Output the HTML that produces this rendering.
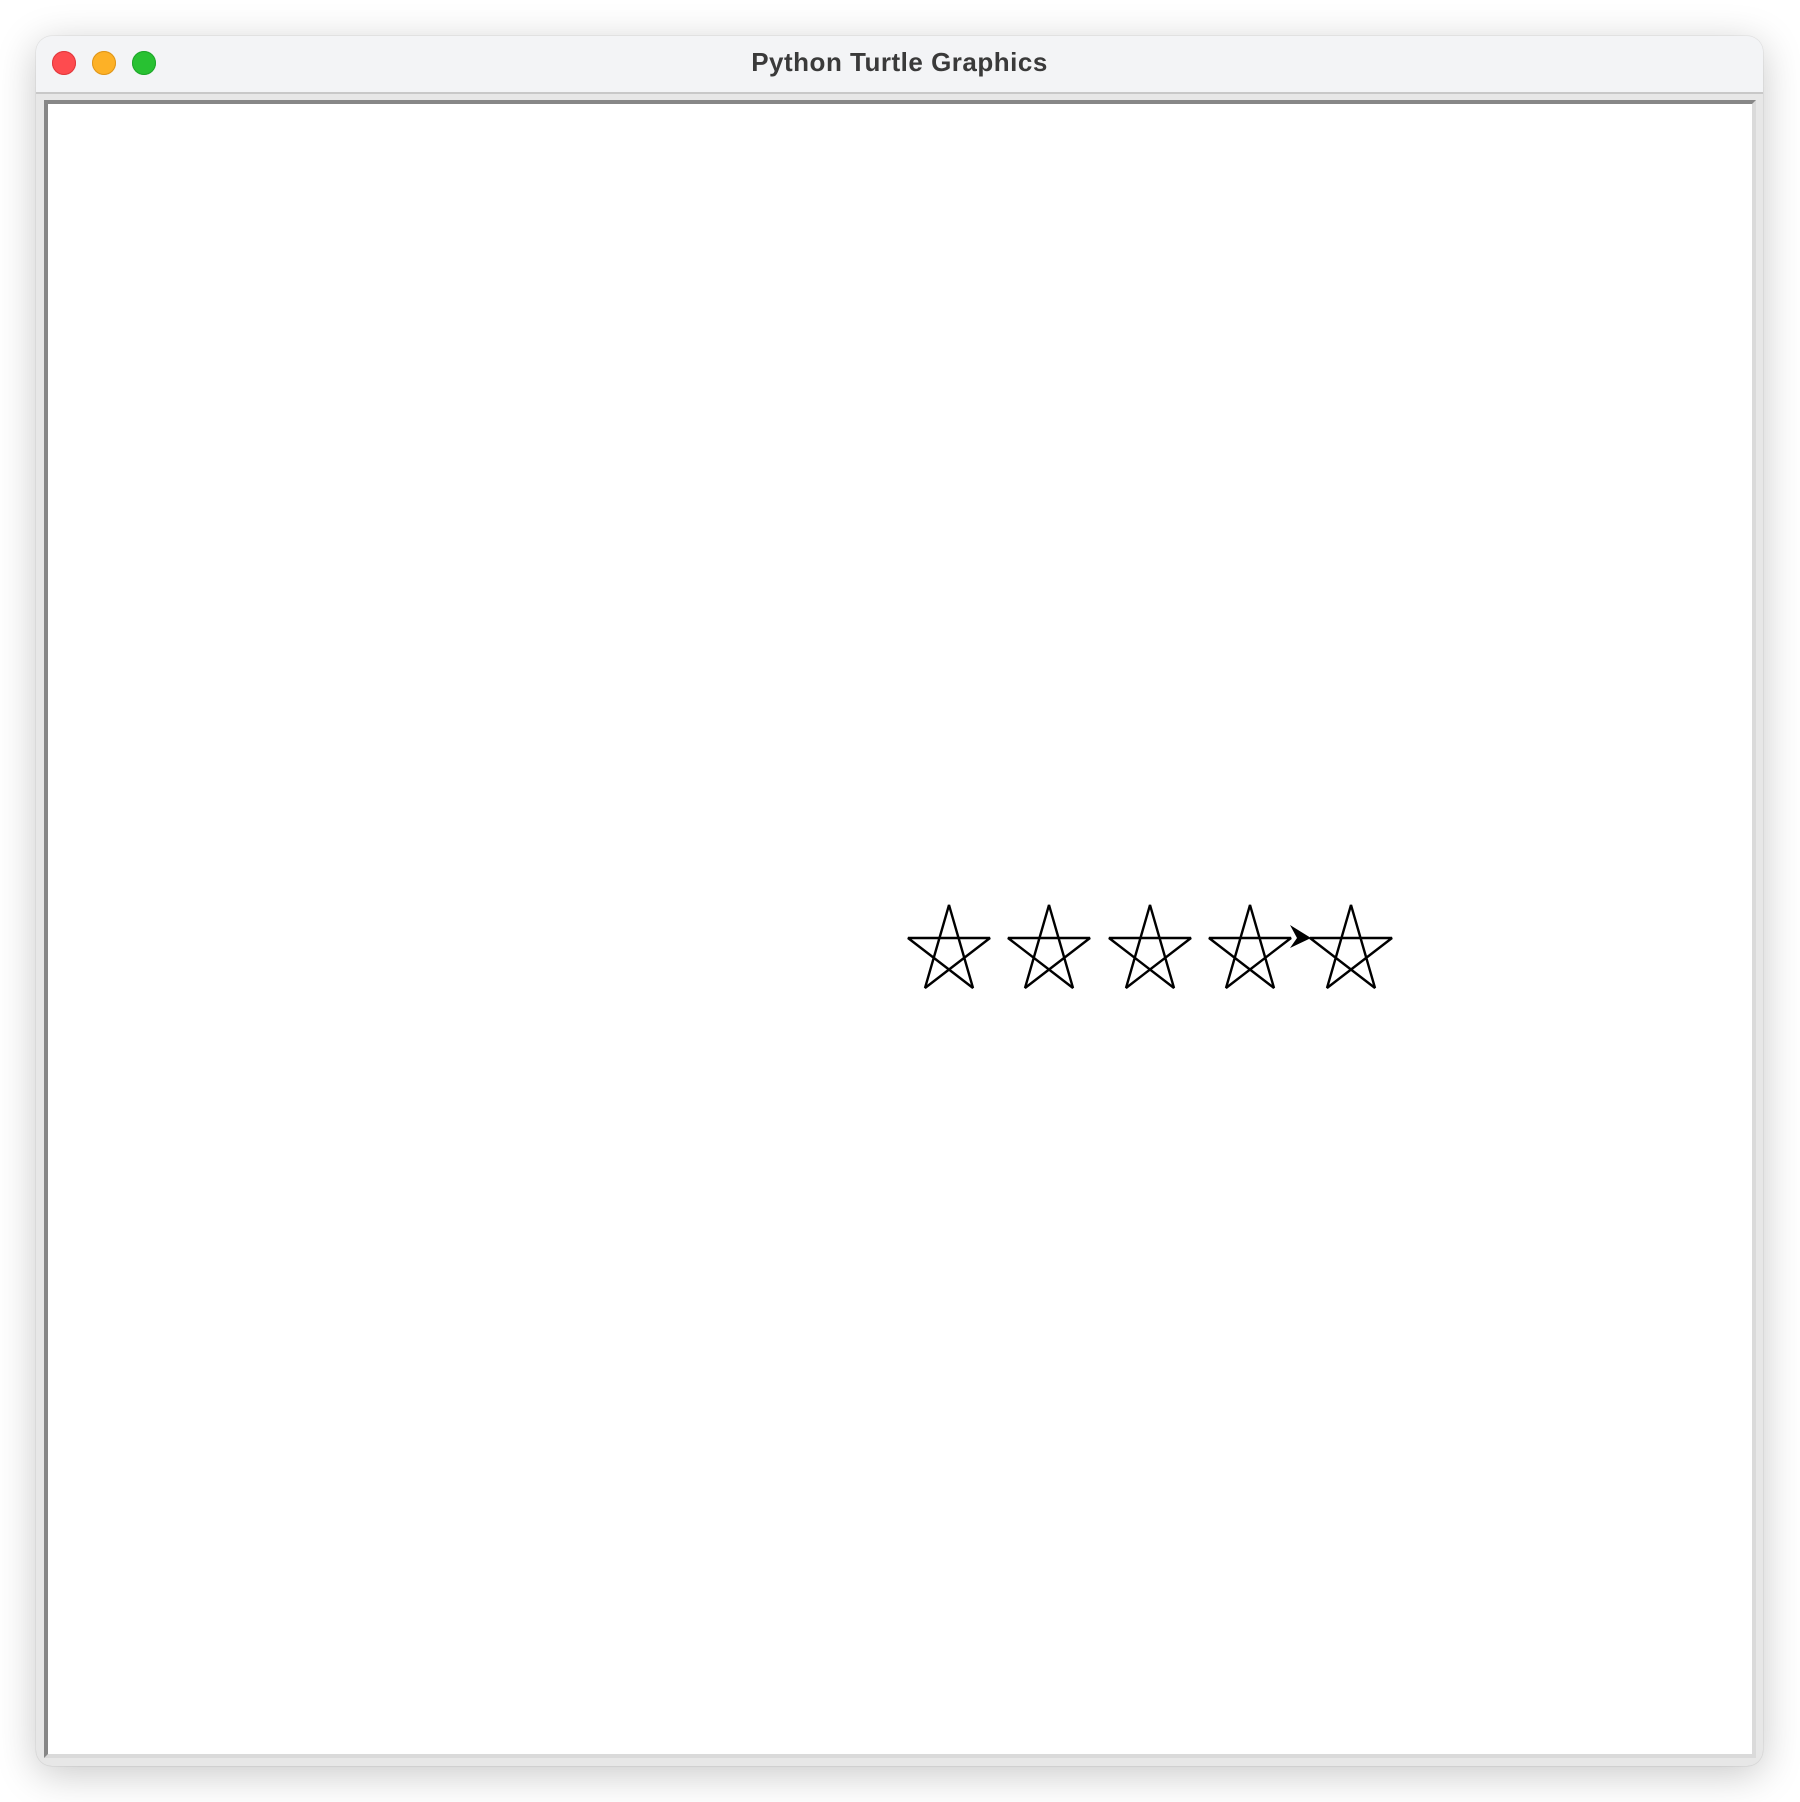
<!DOCTYPE html>
<html><head><style>
html,body{margin:0;padding:0;background:#fff;width:1800px;height:1802px;overflow:hidden}
.win{position:absolute;left:36px;top:36px;width:1727px;height:1730px;border-radius:16px;background:#e7e7e7;box-shadow:0 8px 40px rgba(0,0,0,0.22),0 0 1px rgba(0,0,0,0.3);overflow:hidden}
.bar{position:absolute;left:0;top:0;width:100%;height:56px;background:#f3f4f6;border-bottom:2px solid #c8c8c8}
.dot{position:absolute;top:15px;width:24px;height:24px;border-radius:50%}
.title{position:absolute;left:0;right:0;top:11px;text-align:center;font:bold 26px "Liberation Sans",sans-serif;color:#3a3a3a;letter-spacing:0.5px}
.canvas{position:absolute;left:8px;top:64px;width:1704px;height:1650px;background:#fff;border-left:4px solid #878787;border-top:4px solid #878787;border-right:4px solid #dadada;border-bottom:4px solid #dadada}
</style></head><body>
<div class="win">
<div class="bar">
<div class="dot" style="left:16px;background:#fe4b4f;box-shadow:inset 0 0 0 1px #e0383c"></div>
<div class="dot" style="left:56px;background:#fdb126;box-shadow:inset 0 0 0 1px #de951a"></div>
<div class="dot" style="left:96px;background:#28c132;box-shadow:inset 0 0 0 1px #1ea52a"></div>
<div class="title">Python Turtle Graphics</div>
</div>
<div class="canvas"></div>
</div>
<svg width="1800" height="1802" style="position:absolute;left:0;top:0">
<g transform="translate(0,-3)">
<g fill="none" stroke="#000" stroke-width="2.4" stroke-linejoin="bevel">
<path d="M908 941 L990 941 L925 991 L949 908 L973 991 Z"/>
<path d="M1008 941 L1090 941 L1025 991 L1049 908 L1073 991 Z"/>
<path d="M1109 941 L1191 941 L1126 991 L1150 908 L1174 991 Z"/>
<path d="M1209 941 L1291 941 L1226 991 L1250 908 L1274 991 Z"/>
<path d="M1310 941 L1392 941 L1327 991 L1351 908 L1375 991 Z"/>
</g>
<path d="M1311 941 L1290 928 L1297 941 L1290 951 Z" fill="#000"/>
</g>
</svg>
</body></html>
